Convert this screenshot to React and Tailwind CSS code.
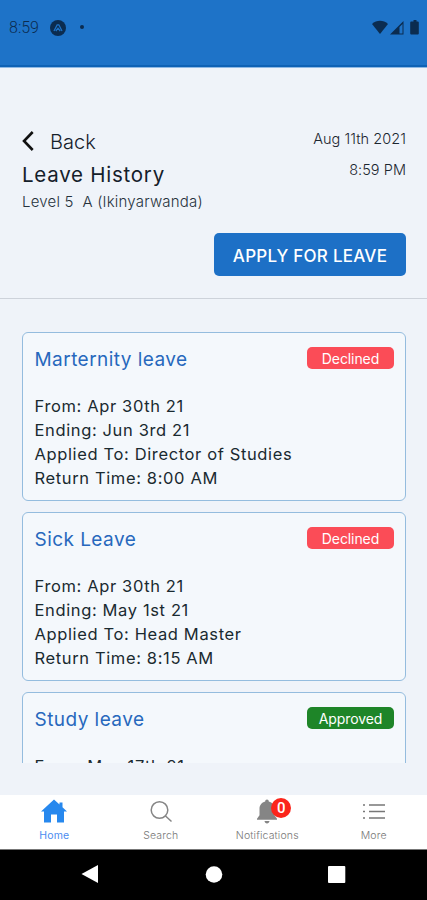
const leaves = [
  {
    id: 1,
    title: 'Marternity leave',
    status: 'Declined',
    details: [
      'From: Apr 30th 21',
      'Ending: Jun 3rd 21',
      'Applied To: Director of Studies',
      'Return Time: 8:00 AM'
    ]
  },
  {
    id: 2,
    title: 'Sick Leave',
    status: 'Declined',
    details: [
      'From: Apr 30th 21',
      'Ending: May 1st 21',
      'Applied To: Head Master',
      'Return Time: 8:15 AM'
    ]
  },
  {
    id: 3,
    title: 'Study leave',
    status: 'Approved',
    details: ['From: May 17th 21']
  }
];

function StatusBar() {
  return (
    <div className="h-[68px] shrink-0 bg-[#1e73c8] border-b border-[#8fb9e4] px-[9px] pt-[18px] flex justify-between items-start text-[#0b2c50] shadow-[inset_0_-2px_0_#0e62b5]">
      <div className="flex items-center h-5">
        <span className="font-['Roboto',sans-serif] font-light text-[16px] w-[41px]">8:59</span>
        <svg width="16" height="16" viewBox="0 0 16 16" className="-mt-px">
          <circle cx="8" cy="8" r="8" fill="currentColor" />
          <path d="M4 11 7.200 4.800h1.600L12 11M5.800 11 8 8.200l2.200 2.800" fill="none" stroke="#1e73c8" strokeWidth="1.300" />
        </svg>
        <span className="size-1 rounded-full bg-[#0b2c50] ml-[14px] -mt-[2px]" />
      </div>
      <div className="flex items-center h-5 -mr-[2px] -mt-px">
        <svg width="48" height="15" viewBox="0 0 48 15" fill="currentColor">
          <path d="M0 4C4.500-.3 11.500-.3 16 4L8 14z" />
          <path d="M31.500 1v13.500H18zM30.500 4 27.500 7V13.500h3z" fillRule="evenodd" />
          <path d="M41.500 0h3v1.500h1.300q1 0 1 1V13.500q0 1-1 1h-6.600q-1 0-1-1V2.500q0-1 1-1h2.300z" />
        </svg>
      </div>
    </div>
  );
}

function PageHeader() {
  return (
    <div className="h-[231px] shrink-0 border-b border-[#cdd2da] pl-[22px] pr-[21px] pt-[59px]">
      <div className="flex justify-between">
        <div>
          <div className="flex items-center h-[30px]">
            <svg width="12" height="20" viewBox="0 0 12 20" fill="none" stroke="#111" strokeWidth="2.600" className="-mt-[3px]">
              <path d="M10.700 1 2 10l8.700 9" />
            </svg>
            <span className="ml-4 text-[20px] leading-[30px] font-light text-[#16202a]">Back</span>
          </div>
          <h1 className="text-[20.5px] leading-[35px] tracking-[0.75px] text-[#14202a]">Leave History</h1>
          <p className="text-[15px] leading-5 font-light tracking-[0.2px] text-[#26323c] whitespace-pre">Level 5  A (Ikinyarwanda)</p>
        </div>
        <div className="text-right text-[14.5px] font-light tracking-[0.05px] text-[#1c2630]">
          <p className="leading-6">Aug 11th 2021</p>
          <p className="leading-6 mt-[7px]">8:59 PM</p>
        </div>
      </div>
      <div className="flex justify-end mt-[21px]">
        <button className="w-[192px] h-[43px] pt-[4px] rounded-[5px] bg-[#1d70c6] text-white text-[17px] font-medium tracking-[0.25px]">
          APPLY FOR LEAVE
        </button>
      </div>
    </div>
  );
}

function LeaveCard({ leave }) {
  return (
    <div className="h-[169px] shrink-0 rounded-[6px] border border-[#94bcde] bg-[#f4f8fc] pl-[11.5px] pr-[11px]">
      <div className="flex justify-between items-start pt-[14px]">
        <h2 className="text-[19px] leading-[25px] tracking-[0.45px] text-[#2768bd]">{leave.title}</h2>
        <span
          className={`w-[87px] h-[22px] rounded-[5px] text-center text-[14px] leading-6 tracking-[-0.1px] text-white ${
            leave.status === 'Approved' ? 'bg-[#1e8528]' : 'bg-[#fb4c57]'
          }`}
        >
          {leave.status}
        </span>
      </div>
      <div className="mt-[22px] text-[16.5px] leading-6 tracking-[0.63px] text-[#1a2a30]">
        {leave.details.map((line) => (
          <p key={line}>{line}</p>
        ))}
      </div>
    </div>
  );
}

function TabBar() {
  return (
    <div className="h-[54px] shrink-0 bg-white grid grid-cols-4 pl-px pt-[3px] text-center text-[10.5px] leading-3 font-light tracking-[0.15px] text-[#777]">
      <div className="flex flex-col items-center text-[#4a8cf0]">
        <svg width="26" height="28" viewBox="0 0 26 28" fill="#2788ee">
          <path d="M13 1.500 18.500 6.500V4.500h3V9.300L26 13.500h-3V24.500h-7v-8h-6v8H3v-11H0z" />
        </svg>
        <span className="mt-[4px] font-normal">Home</span>
      </div>
      <div className="flex flex-col items-center">
        <svg width="24" height="28" viewBox="0 0 24 28" fill="none" stroke="#858585" strokeWidth="1.500">
          <circle cx="10.500" cy="12" r="8.300" />
          <path d="m16.500 18 6 5.500" />
        </svg>
        <span className="mt-[4px]">Search</span>
      </div>
      <div className="flex flex-col items-center">
        <div className="relative">
          <svg width="22" height="28" viewBox="0 0 22 28" fill="#858585">
            <path d="M11 1.500c1.100 0 1.800.8 1.800 1.900 3.600.9 5.700 3.700 5.700 7.300v6.500l2.500 3.500v1H1v-1l2.500-3.500v-6.500c0-3.600 2.100-6.400 5.700-7.300 0-1.100.7-1.900 1.800-1.900zM8.500 23h5c-.2 1.600-1.200 2.500-2.500 2.500S8.700 24.600 8.500 23z" />
          </svg>
          <span className="absolute left-[15px] top-0 size-5 rounded-full bg-[#fb251b] text-white font-['Roboto',sans-serif] text-[15px] leading-5 font-medium tracking-normal">0</span>
        </div>
        <span className="mt-[4px]">Notifications</span>
      </div>
      <div className="flex flex-col items-center">
        <svg width="24" height="28" viewBox="0 0 24 28" fill="none" stroke="#777" strokeWidth="1.600">
          <path d="M1 7h2M7 7h16M1 13.500h2M7 13.500h16M1 20h2M7 20h16" />
        </svg>
        <span className="mt-[4px]">More</span>
      </div>
    </div>
  );
}

function AndroidNav() {
  return (
    <div className="h-[51px] shrink-0 bg-black border-t border-[#777] flex items-center">
      <svg width="427" height="50" viewBox="0 0 427 50" fill="#fff">
        <path d="M98 15v18L81.500 24z" />
        <circle cx="214" cy="24.500" r="8.300" />
        <rect x="328" y="16" width="17.300" height="17" rx="1" />
      </svg>
    </div>
  );
}

export default function App() {
  return (
    <div className="w-[427px] h-[900px] overflow-hidden flex flex-col bg-[#eff3f9] font-['Inter',sans-serif]">
      <StatusBar />
      <PageHeader />
      <div className="h-[464px] shrink-0 overflow-hidden pl-[22px] pr-[21px] pt-[33px] flex flex-col gap-[11px]">
        {leaves.map((leave) => (
          <LeaveCard key={leave.id} leave={leave} />
        ))}
      </div>
      <div className="h-8 shrink-0" />
      <TabBar />
      <AndroidNav />
    </div>
  );
}
